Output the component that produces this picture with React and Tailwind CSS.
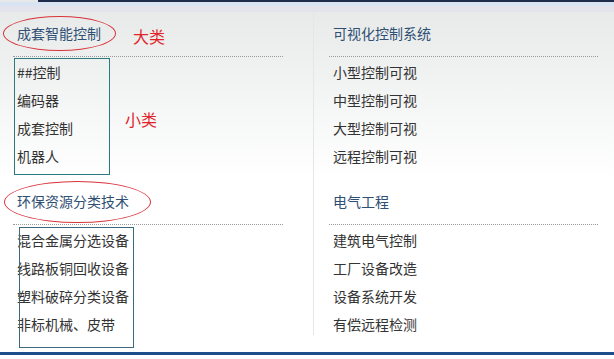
import React from 'react';

const sections = [
  {
    left: { title: '成套智能控制', items: ['##控制', '编码器', '成套控制', '机器人'] },
    right: { title: '可视化控制系统', items: ['小型控制可视', '中型控制可视', '大型控制可视', '远程控制可视'] },
  },
  {
    left: { title: '环保资源分类技术', items: ['混合金属分选设备', '线路板铜回收设备', '塑料破碎分类设备', '非标机械、皮带'] },
    right: { title: '电气工程', items: ['建筑电气控制', '工厂设备改造', '设备系统开发', '有偿远程检测'] },
  },
];

function Block({ data, first }) {
  return (
    <div className={first ? '' : 'mt-[17px]'}>
      <div className="border-b border-dotted border-[#9a9a9a] pb-[9px]">
        <div className="pl-1 h-[28px] leading-[28px] text-[14px] text-[#2f4f74]">{data.title}</div>
      </div>
      <ul className="mt-[1px]">
        {data.items.map((t) => (
          <li key={t} className="pl-1 h-[28px] leading-[28px] text-[14px] text-[#333]">
            {t}
          </li>
        ))}
      </ul>
    </div>
  );
}

export default function App() {
  return (
    <div
      className="relative w-[614px] h-[359px] overflow-hidden bg-gradient-to-b from-[#e6e9e8] via-white to-white"
      style={{ fontFamily: '"Noto Sans CJK SC", "Noto Sans", sans-serif' }}
    >
      {/* top bars */}
      <div className="flex h-[2px]">
        <div className="w-[38px]" />
        <div className="flex-1 bg-[#1c2b4c]" />
      </div>
      <div className="h-[4px] bg-[#d8e4f2]" />
      <div className="h-[6px] bg-[#e3e3ee]" />

      <div className="flex h-[340px]">
        <div className="w-[270px] ml-[13px] pt-[7px]">
          {sections.map((s, i) => (
            <Block key={i} data={s.left} first={i === 0} />
          ))}
        </div>
        <div className="w-[1px] ml-[30px] h-[323px] bg-[#e6e6e6]" />
        <div className="w-[269px] ml-[15px] pt-[7px]">
          {sections.map((s, i) => (
            <Block key={i} data={s.right} first={i === 0} />
          ))}
        </div>
      </div>

      <div className="h-[3px] bg-[#1e4d8c]" />

      {/* annotations drawn over the menu */}
      <div className="absolute left-[3px] top-[16px] w-[113px] h-[35px] rounded-[50%] border border-[#d9343c]" />
      <div className="absolute left-[4px] top-[181px] w-[147px] h-[42px] rounded-[50%] border border-[#d9343c]" />
      <div className="absolute left-[14px] top-[58px] w-[96px] h-[117px] border border-[#2b7a80]" />
      <div className="absolute left-[19px] top-[227px] w-[115px] h-[121px] border border-[#3b6a7e]" />
      <div className="absolute left-[133px] top-[25px] text-[16px] leading-[22px] text-[#e0242a]">大类</div>
      <div className="absolute left-[125px] top-[108px] text-[16px] leading-[22px] text-[#e0242a]">小类</div>
    </div>
  );
}
